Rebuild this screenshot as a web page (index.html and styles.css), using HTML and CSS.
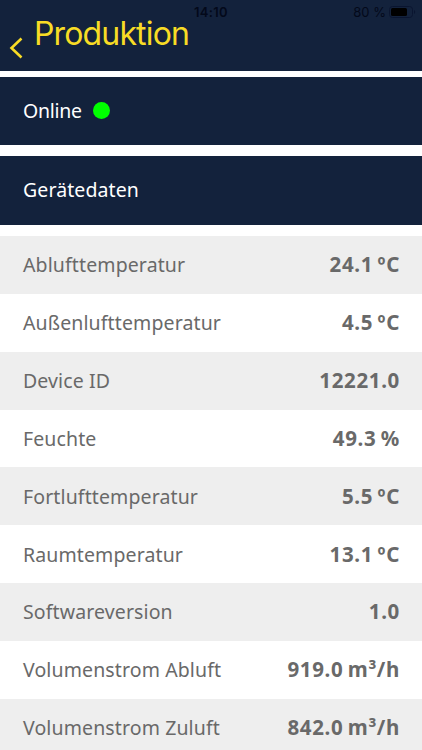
FILE: index.html
```html
<!DOCTYPE html>
<html lang="de">
<head>
    <meta charset="UTF-8">
    <meta name="viewport" content="width=device-width, initial-scale=1.0">
    <title>Produktion</title>
    <link rel="stylesheet" href="styles.css">
</head>
<body>

    <header class="header">
        <div class="status-bar">
            <span></span>
            <span class="time">14:10</span>
            <span class="battery">
                80 %
                <svg width="28" height="14" viewBox="0 0 28 14">
                    <rect x="1.5" y="1.5" width="23" height="11" rx="3" fill="none" stroke="#0a1530"/>
                    <rect x="3" y="3" width="16" height="8" rx="1.5" fill="#000"/>
                    <path d="M26 5v4c1.500-.6 1.500-3.400 0-4z" fill="#0a1530"/>
                </svg>
            </span>
        </div>
        <div class="nav">
            <svg class="back" width="14" height="22" viewBox="0 0 14 22">
                <path d="M12.500 1.500L2.500 11l10 9.500" fill="none" stroke="#f8dc25" stroke-width="2.600"/>
            </svg>
            <h1>Produktion</h1>
        </div>
    </header>

    <section class="panel">
        <span class="online">Online</span>
        <span class="dot"></span>
    </section>

    <section class="panel panel-data">
        <h2>Gerätedaten</h2>
    </section>

    <ul class="list">
        <li><span class="label">Ablufttemperatur</span><span class="value">24.1 ºC</span></li>
        <li><span class="label">Außenlufttemperatur</span><span class="value">4.5 ºC</span></li>
        <li><span class="label">Device ID</span><span class="value">12221.0</span></li>
        <li><span class="label">Feuchte</span><span class="value">49.3 %</span></li>
        <li><span class="label">Fortlufttemperatur</span><span class="value">5.5 ºC</span></li>
        <li><span class="label">Raumtemperatur</span><span class="value">13.1 ºC</span></li>
        <li><span class="label">Softwareversion</span><span class="value">1.0</span></li>
        <li><span class="label">Volumenstrom Abluft</span><span class="value">919.0 m³/h</span></li>
        <li><span class="label">Volumenstrom Zuluft</span><span class="value">842.0 m³/h</span></li>
    </ul>

</body>
</html>
```
FILE: styles.css
```css
body {
    font-family: 'Noto Sans', 'Open Sans', sans-serif;
    font-size: 19.5px;
    background-color: #ffffff;
    margin: 0;
    height: 750px;
    overflow: hidden;
    color: #696969;
}

.header {
    height: 71px;
    background-color: #13223c;
    font-family: Inter, sans-serif;
}

.status-bar {
    display: grid;
    grid-template-columns: 1fr auto 1fr;
    align-items: center;
    height: 22px;
    padding: 1px 6px 0;
    box-sizing: border-box;
    font-size: 13px;
    color: #03091a;
}

.time {
    font-weight: 600;
    letter-spacing: 0.3px;
}

.battery {
    display: flex;
    align-items: center;
    justify-content: flex-end;
    gap: 2px;
}

.nav {
    display: flex;
    align-items: flex-start;
    padding-left: 9px;
}

.back {
    margin-top: 15px;
}

h1 {
    margin: -7px 0 0 11px;
    font-size: 32px;
    line-height: 38px;
    font-weight: 400;
    letter-spacing: -0.85px;
    color: #f8dc25;
}

.panel {
    display: flex;
    align-items: center;
    height: 68px;
    margin-top: 6px;
    padding: 0 23px 1px;
    box-sizing: border-box;
    background-color: #13223c;
    color: #ffffff;
}

.panel-data {
    height: 69px;
    margin-top: 11px;
    padding-bottom: 2px;
}

.online {
    margin-top: -1px;
    letter-spacing: -0.3px;
}

h2 {
    margin: 0;
    font-size: inherit;
    font-weight: 400;
    letter-spacing: 0.1px;
}

.dot {
    width: 17px;
    height: 17px;
    margin-left: 11px;
    border-radius: 50%;
    background-color: #00ff00;
}

.list {
    list-style: none;
    margin: 11px 0 0;
    padding: 0;
}

.list li {
    display: flex;
    align-items: center;
    justify-content: space-between;
    height: 57.85px;
    padding: 0 22px 0 23px;
}

.list li:nth-child(odd) {
    background-color: #eeeeee;
}

.label {
    letter-spacing: 0.12px;
}

.value {
    padding-bottom: 1px;
    font-size: 20.5px;
    font-weight: 700;
    letter-spacing: 0.65px;
    word-spacing: -1.5px;
}
```
